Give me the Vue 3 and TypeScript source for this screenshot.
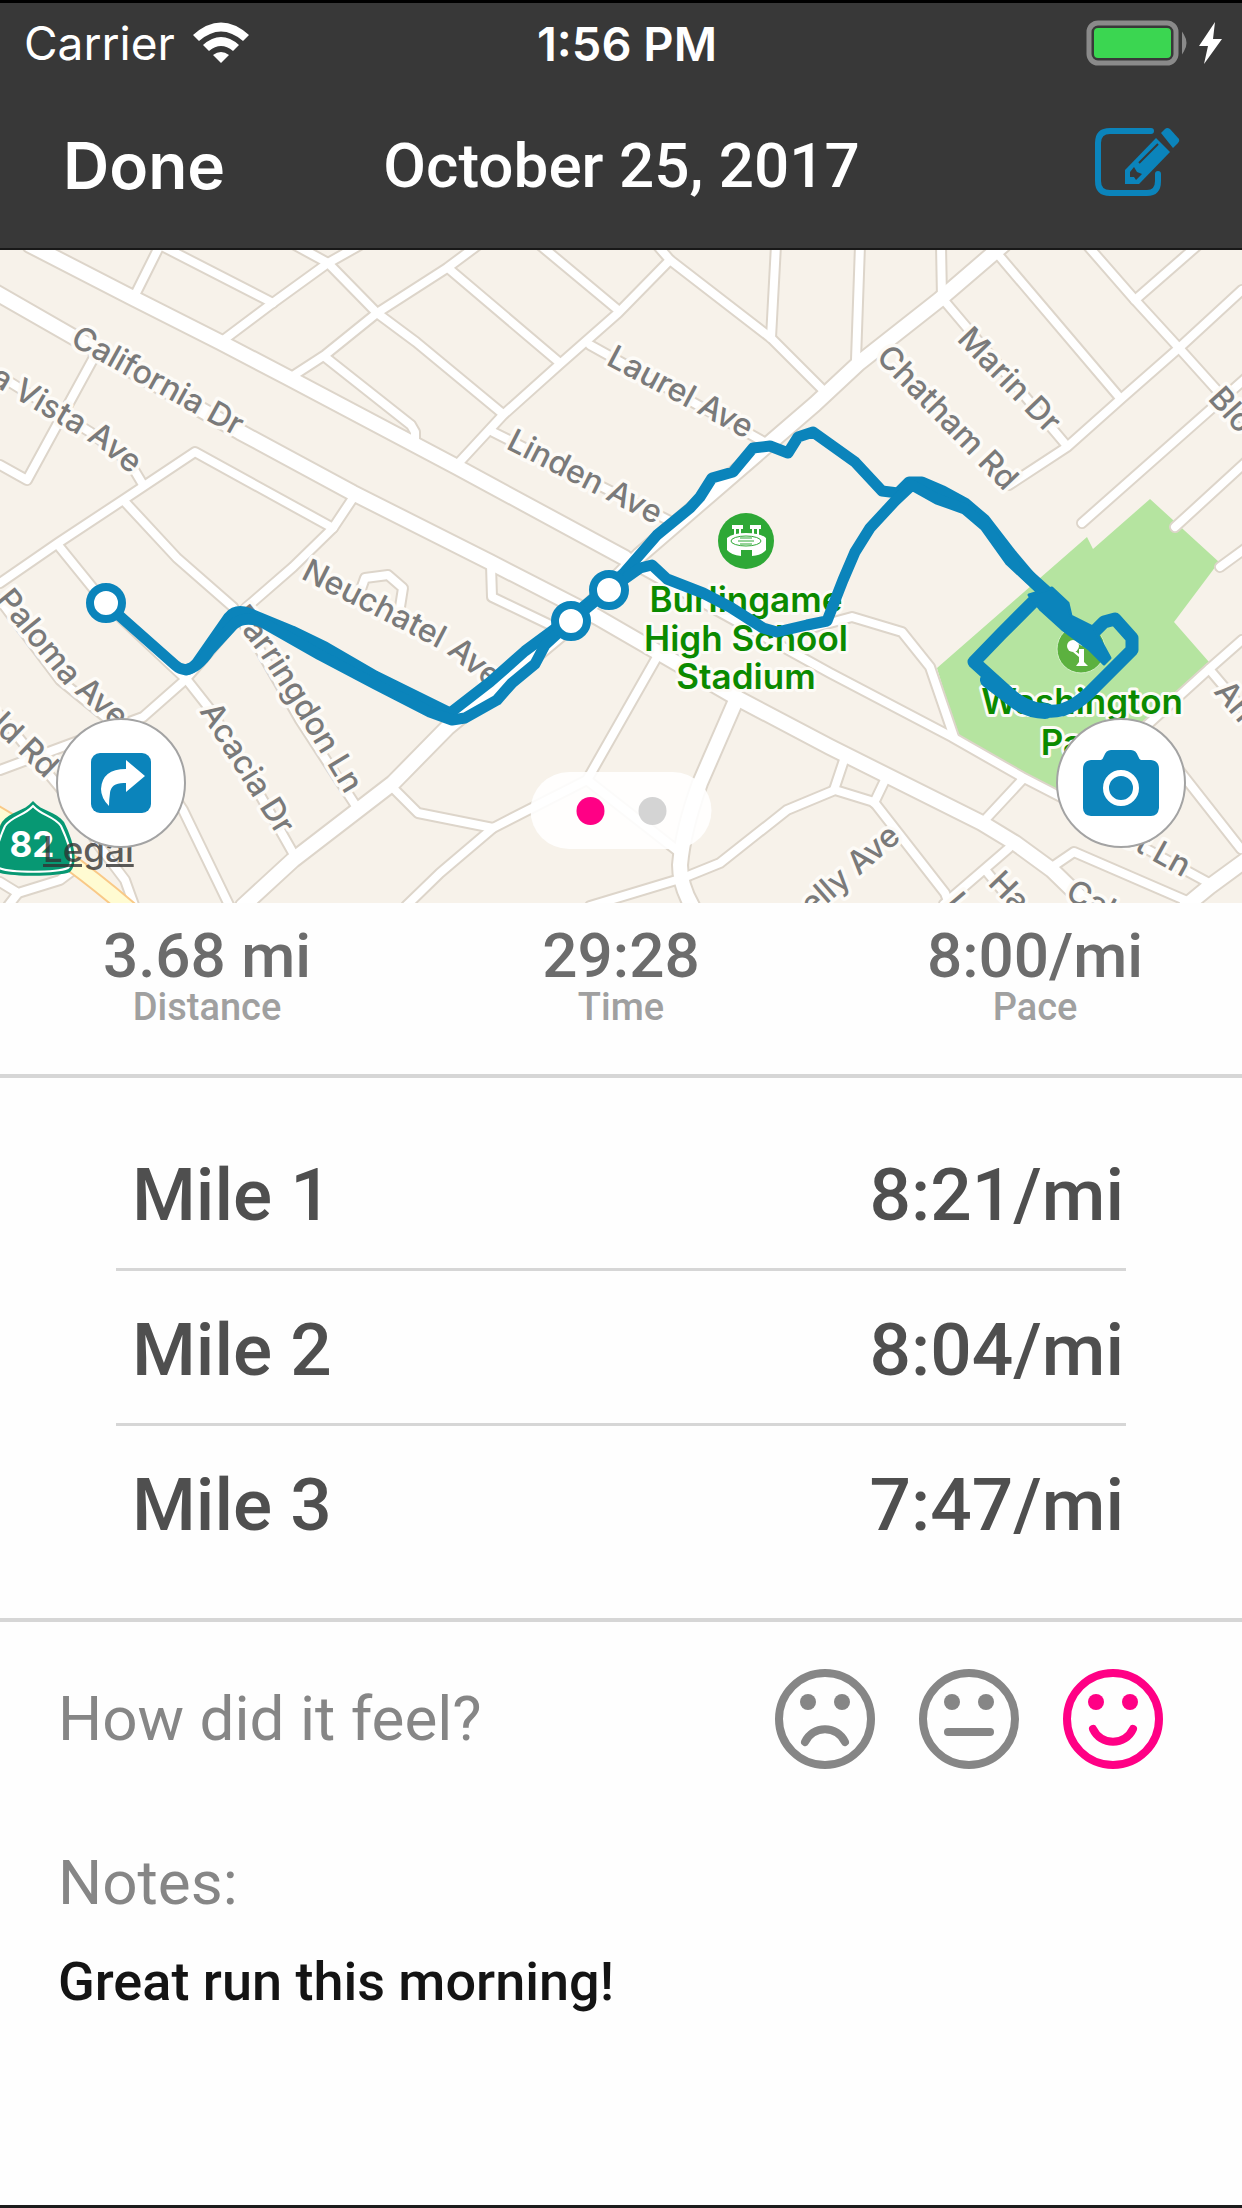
<script setup lang="ts">
import { ref } from 'vue'

interface MapLabel {
  text: string
  x: number
  y: number
  angle: number
}

interface CurvedLabel {
  id: string
  text: string
  path: string
}

const stats = [
  { label: 'Distance', value: '3.68 mi' },
  { label: 'Time', value: '29:28' },
  { label: 'Pace', value: '8:00/mi' },
]

const splits = [
  { name: 'Mile 1', pace: '8:21/mi' },
  { name: 'Mile 2', pace: '8:04/mi' },
  { name: 'Mile 3', pace: '7:47/mi' },
]

const moods = [
  { id: 'bad', name: 'Bad', mouth: 'M30 73 A22 22 0 0 1 70 73' },
  { id: 'okay', name: 'Okay', mouth: 'M29 63 H71' },
  { id: 'good', name: 'Good', mouth: 'M30 60 A22 22 0 0 0 70 60' },
]

const mood = ref('good')
const notes = ref('Great run this morning!')
const slide = ref(0)

const minorRoads = [
  'M160 245 L134 297',
  'M160 245 L273 303',
  'M360 245 L328 263 L270 305 L222 341',
  'M295 245 L328 263 L377 313 L416 342 L503 414',
  'M478 245 L447 268 L377 313 L325 355 L288 379',
  'M325 357 L411 425 L415 432 L415 447',
  'M98 350 L27 480 L0 465',
  'M0 376 L90 432 L130 463 L142 483',
  'M0 583 L58 543 L123 500 L195 452 L333 528 L353 498',
  'M333 528 L293 567 L247 607 L185 680 L143 717 L0 770',
  'M125 502 L177 558 L233 607 L260 650 L300 720 L356 806',
  'M58 545 L105 603 L187 680 L213 713 L280 830 L297 860',
  'M0 600 L60 680 L140 745 L183 810 L229 905',
  'M0 715 L70 800 L100 847 L125 880 L134 905',
  'M0 882 L18 893 L60 880 L76 868',
  'M18 893 L8 906',
  'M360 592 L365 578 L388 575 L403 588 L400 607',
  'M390 785 L418 813 L493 828 L587 780 L657 657',
  'M493 828 L440 873 L406 906',
  'M587 780 L679 852',
  'M590 906 L683 878 L720 863 L787 810 L835 790 L874 802 L945 893 L950 906',
  'M844 760 L834 790',
  'M885 780 L874 803',
  'M1022 780 L982 823',
  'M1009 848 L944 904',
  'M987 872 L1010 900',
  'M1052 867 L1074 852 L1187 901',
  'M1175 765 L1241 849',
  'M1130 840 L1209 883',
  'M1242 640 L1209 669 L1145 727',
  'M1209 669 L1242 708',
  'M815 627 L852 617 L902 632 L930 667 L954 737',
  'M491 565 L492 597 L565 632',
  'M448 268 L560 363',
  'M540 245 L618 310',
  'M657 245 L670 260 L618 313 L560 364 L503 415 L454 468',
  'M670 260 L771 338 L823 390',
  'M776 245 L771 338',
  'M860 245 L856 360',
  'M941 245 L942 298 L1067 446',
  'M990 245 L1120 398',
  'M1242 290 L1179 348 L1122 398 L1067 447 L1009 485',
  'M1087 245 L1135 300 L1179 348 L1242 418',
  'M1198 245 L1135 300',
  'M1246 378 L1082 523',
  'M1246 462 L1175 527',
  'M1246 548 L1220 567',
  'M590 345 L766 443',
  'M493 432 L672 522',
  'M640 568 L830 673 L952 737 L1022 777 L1090 812',
]

const wideRoads = [
  'M30 245 L133 298 L220 342 L287 377 L457 467 L625 558',
  'M-5 292 L70 335 L240 432 L353 493 L490 562 L597 617 L737 698 L830 747 L982 823 L1015 843 L1052 870 L1090 907',
  'M1003 245 L939 300 L859 363 L815 404 L640 555 L571 625 L448 727 L393 783 L293 860 L243 906',
  'M737 698 L700 783 Q683 830 680 865 Q680 885 692 906',
  'M1246 860 L1209 887 L1186 906',
]

const runs = [
  'M105 603 L175 665 Q186 675 197 663 L229 617 Q236 609 248 613 L292 631 L325 647 L375 676 L450 713 L490 682 L525 651 L548 634 L571 617 L623 574 L657 535 L690 508 L700 497 L712 478 L733 472 L753 448 L770 446 L788 453 L798 437 L813 432 L855 462 L882 491 L898 493 L909 482 L922 482 L943 491 L965 503 L985 520 L1012 555 L1039 587',
  'M186 670 Q198 668 210 650 L233 625 Q244 615 262 622 L320 655 L375 684 L430 712 L452 720 L465 718 L497 700 L512 683 L535 664 L545 645 L571 621 L609 590 L640 568 L652 565 L667 579 L703 593 L730 607 L763 628 L777 632 L807 625 L827 621 L843 580 L855 552 L870 528 L895 501 L912 485 L937 499 L965 509 L985 526 L1010 561 L1039 588',
]

const labels: MapLabel[] = [
  { text: 'California Dr', x: 69, y: 344, angle: 29 },
  { text: 'Laurel Ave', x: 605, y: 364, angle: 28 },
  { text: 'Linden Ave', x: 505, y: 448, angle: 27 },
  { text: 'Chatham Rd', x: 875, y: 358, angle: 46 },
  { text: 'Marin Dr', x: 956, y: 340, angle: 46 },
  { text: 'Blo', x: 1207, y: 399, angle: 48 },
  { text: 'Acacia Dr', x: 199, y: 711, angle: 58 },
  { text: 'eld Rd', x: -23, y: 713, angle: 44 },
  { text: 'elly Ave', x: 812, y: 917, angle: -41 },
  { text: 'Ha', x: 987, y: 884, angle: 46 },
  { text: 'Cal', x: 1064, y: 898, angle: 28 },
  { text: 'L', x: 944, y: 904, angle: 50 },
  { text: 'et Ln', x: 1117, y: 841, angle: 29 },
  { text: 'An', x: 1213, y: 692, angle: 50 },
]

const curvedLabels: CurvedLabel[] = [
  { id: 'vista', text: 'a Vista Ave', path: 'M-11 383 L25 404 L78 435 L96 446 L150 490' },
  { id: 'neuchatel', text: 'Neuchatel Ave', path: 'M300 578 L395 626 L445 652 L510 704' },
  { id: 'farringdon', text: 'Farringdon Ln', path: 'M230 616 L258 652 L290 702 L376 846' },
  { id: 'paloma', text: 'Paloma Ave', path: 'M-5 600 L62 682 L150 758' },
]

const waypoints = [
  { x: 106, y: 603 },
  { x: 571, y: 621 },
  { x: 609, y: 590 },
]
</script>

<template>
  <main class="screen">
    <header class="top">
      <div class="status">
        <div class="carrier">
          <span>Carrier</span>
          <svg width="56" height="42" viewBox="0 0 56 42" aria-hidden="true">
            <path d="M0 13 Q28 -12 56 13 L50 19 Q28 0 6 19 Z" fill="#fff" />
            <path d="M10 23 Q28 7 46 23 L40 29 Q28 19 16 29 Z" fill="#fff" />
            <path d="M20 33 Q28 27 36 33 L28 41 Z" fill="#fff" />
          </svg>
        </div>
        <span class="clock">1:56 PM</span>
        <svg class="battery" width="138" height="46" viewBox="0 0 138 46" aria-hidden="true">
          <rect x="3" y="3" width="87" height="40" rx="9" fill="none" stroke="#8a8a8a" stroke-width="5" />
          <rect x="8" y="8" width="77" height="30" rx="4" fill="#3bd651" />
          <path d="M97 15 Q102 23 97 31 Z" fill="#8a8a8a" stroke="#8a8a8a" stroke-width="2" />
          <path d="M129 2 L113 26 H122 L118 44 L136 19 H127 Z" fill="#fff" />
        </svg>
      </div>
      <nav class="bar">
        <button type="button" class="done">Done</button>
        <h1>October 25, 2017</h1>
        <button type="button" class="edit" aria-label="Edit">
          <svg width="86" height="70" viewBox="0 0 86 70" aria-hidden="true">
            <path d="M57 4 H16 Q4 4 4 16 V54 Q4 66 16 66 H53 Q64 66 64 54 V47" fill="none" stroke="#0b84bb" stroke-width="6" stroke-linecap="round" />
            <path d="M62 11 L76 25 L45 57 H31 V43 Z" fill="#0b84bb" />
            <path d="M67 6 L71 2 Q73 0 76 2 L85 12 Q86 14 84 16 L79 21 Z" fill="#0b84bb" />
            <path d="M36 45 L40 40 L43 45 L48 47 L42 53 L40 50 L36 50 Z" fill="#383838" />
            <path d="M45 36 L64 17" stroke="#383838" stroke-width="2" />
          </svg>
        </button>
      </nav>
    </header>

    <section class="map" aria-label="Route map">
      <svg class="canvas" viewBox="0 250 1242 653">
        <rect x="0" y="250" width="1242" height="653" fill="#f7f2ea" />
        <path
          d="M1150 499 L1219 562 L1174 622 L1209 662 L1120 760 L1080 802 L959 742 L937 668 L1087 537 L1093 549 Z"
          fill="#b5e4a0"
        />
        <g class="road">
          <g stroke="#ddd5ca">
            <path v-for="d in minorRoads" :key="d" :d="d" stroke-width="12" />
            <path v-for="d in wideRoads" :key="d" :d="d" stroke-width="18" />
          </g>
          <g stroke="#fff">
            <path v-for="d in minorRoads" :key="d" :d="d" stroke-width="8" />
            <path v-for="d in wideRoads" :key="d" :d="d" stroke-width="14" />
          </g>
          <path d="M-5 813 Q60 850 130 910" stroke="#f9c987" stroke-width="18" />
          <path d="M-5 813 Q60 850 130 910" stroke="#fffbd2" stroke-width="14" />
        </g>

        <g class="street">
          <text v-for="l in labels" :key="l.text" :transform="`translate(${l.x} ${l.y}) rotate(${l.angle})`">{{ l.text }}</text>
          <template v-for="l in curvedLabels" :key="l.id">
            <path :id="l.id" :d="l.path" class="guide" />
            <text><textPath :href="`#${l.id}`">{{ l.text }}</textPath></text>
          </template>
        </g>

        <circle cx="746" cy="541" r="28" fill="#2ea836" />
        <g fill="#fff">
          <rect x="732" y="525" width="11" height="4" />
          <rect x="750" y="525" width="11" height="4" />
          <path d="M734 529 h2 v6 h-2z M739 529 h2 v6 h-2z M752 529 h2 v6 h-2z M757 529 h2 v6 h-2z" />
          <path d="M727 538 Q733 533 746 533 Q760 533 766 538 V550 Q762 555 752 556 V550 H741 V556 Q731 555 727 550 Z" />
        </g>
        <ellipse cx="746" cy="541" rx="15" ry="5" fill="none" stroke="#2ea836" stroke-width="1" />
        <path d="M738 541 H754 M740 538 H752 M740 544 H752" stroke="#2ea836" stroke-width="1" />

        <circle cx="1081" cy="649" r="24" fill="#5cb13f" stroke="#d2efc6" stroke-width="1" />
        <g fill="#fff">
          <circle cx="1073" cy="646" r="6" />
          <circle cx="1084" cy="638" r="8" />
          <path d="M1074 650 L1079 654 V649 H1084 V662 L1088 666 H1076 L1079 662 V657 L1073 652 Z" />
        </g>

        <g class="place">
          <text x="746" y="612">Burlingame</text>
          <text x="746" y="651">High School</text>
          <text x="746" y="689">Stadium</text>
          <text x="1082" y="714">Washington</text>
          <text x="1079" y="755">Park</text>
        </g>

        <g class="run">
          <path v-for="d in runs" :key="d" :d="d" />
          <path
            d="M1035 600 L1002 633 L974 662 L1015 699 Q1039 715 1062 710 Q1075 706 1089 693 L1132 650 L1132 638 L1115 619 L1104 622 L1092 634"
            stroke-width="13"
          />
          <path d="M988 680 L1017 702 Q1030 711 1045 711" stroke-width="16" />
          <path d="M1024 572 L1055 600 L1064 617" stroke-width="13" />
          <path
            d="M1029 595 L1052 588 L1068 603 L1071 616 L1093 627 L1104 647 L1110 658 L1104 664 L1089 649 L1062 629 L1041 610 Z"
            stroke-width="3"
            fill="#0b84bb"
          />
        </g>
        <g v-for="p in waypoints" :key="p.x">
          <circle :cx="p.x" :cy="p.y" r="16" fill="#fff" stroke="#0b84bb" stroke-width="8" />
        </g>

        <path
          d="M33 801 C42 812 56 811 64 822 C72 838 80 862 70 872 C58 877 10 877 -3 872 C-12 862 -6 838 2 822 C10 811 24 812 33 801 Z"
          fill="#079873"
        />
        <path
          d="M33 806 C42 816 54 816 61 826 C67 839 76 860 68 868 C56 873 10 873 -1 868 C-8 860 -1 839 5 826 C12 816 24 816 33 806 Z"
          fill="none"
          stroke="#fff"
          stroke-width="2"
        />
        <text class="route-number" x="32" y="857">82</text>
      </svg>

      <a class="legal" href="#legal">Legal</a>

      <button type="button" class="round share" aria-label="Share">
        <svg width="60" height="60" viewBox="0 0 60 60" aria-hidden="true">
          <rect width="60" height="60" rx="9" fill="#0b84bb" />
          <path d="M35 7 L54 23 L35 39 V30 Q20 29 19 40 Q18 47 18 53 Q10 45 10 36 Q11 16 35 16 Z" fill="#fff" />
        </svg>
      </button>

      <div class="pager">
        <button
          v-for="n in 2"
          :key="n"
          type="button"
          class="dot"
          :class="{ on: slide === n - 1 }"
          :aria-label="`Slide ${n}`"
          @click="slide = n - 1"
        ></button>
      </div>

      <button type="button" class="round photo" aria-label="Photos">
        <svg width="76" height="66" viewBox="0 0 76 66" aria-hidden="true">
          <path d="M8 10 H18 Q20 9 21 6 Q23 0 28 0 H48 Q53 0 55 6 Q56 9 58 10 H68 Q76 11 76 19 V58 Q75 66 68 66 H8 Q0 65 0 58 V19 Q0 11 8 10 Z" fill="#0b84bb" />
          <circle cx="38" cy="38" r="15" fill="none" stroke="#fff" stroke-width="6" />
        </svg>
      </button>
    </section>

    <dl class="stats">
      <div v-for="s in stats" :key="s.label" class="stat">
        <dt>{{ s.label }}</dt>
        <dd>{{ s.value }}</dd>
      </div>
    </dl>

    <section class="splits">
      <table>
        <tbody>
          <tr v-for="s in splits" :key="s.name">
            <th scope="row">{{ s.name }}</th>
            <td>{{ s.pace }}</td>
          </tr>
        </tbody>
      </table>
    </section>

    <form class="journal" @submit.prevent>
      <fieldset class="feel">
        <legend class="hidden">How did it feel?</legend>
        <span class="prompt" aria-hidden="true">How did it feel?</span>
        <div class="faces">
          <label v-for="m in moods" :key="m.id" class="face" :class="{ picked: mood === m.id }">
            <input v-model="mood" class="hidden" type="radio" name="mood" :value="m.id" :aria-label="m.name" />
            <svg width="100" height="100" viewBox="0 0 100 100" aria-hidden="true">
              <circle cx="50" cy="50" r="46" fill="none" stroke="currentColor" stroke-width="8" />
              <circle cx="33" cy="33" r="8" fill="currentColor" />
              <circle cx="67" cy="33" r="8" fill="currentColor" />
              <path :d="m.mouth" fill="none" stroke="currentColor" stroke-width="8" stroke-linecap="round" />
            </svg>
          </label>
        </div>
      </fieldset>
      <label class="prompt notes-label" for="notes">Notes:</label>
      <textarea id="notes" v-model="notes" rows="2"></textarea>
    </form>
  </main>
</template>

<style>
body {
  margin: 0;
  background: #fefefe;
}
</style>

<style scoped>
.screen {
  display: flex;
  flex-direction: column;
  box-sizing: border-box;
  min-height: 100vh;
  border-bottom: 3px solid #1c1c1c;
  background: #fefefe;
  font-family: Roboto, sans-serif;
}

button {
  padding: 0;
  border: 0;
  background: none;
  font: inherit;
  color: inherit;
  cursor: pointer;
}

svg {
  display: block;
}

.top {
  border-top: 3px solid #000;
  border-bottom: 2px solid #181818;
  background: #383838;
  color: #fff;
}

.status {
  display: grid;
  grid-template-columns: 1fr auto 1fr;
  align-items: center;
  height: 80px;
  padding: 0 18px 0 24px;
  font-family: Inter, sans-serif;
  font-size: 46px;
}

.carrier {
  display: flex;
  align-items: center;
  gap: 18px;
}

.clock {
  padding-left: 6px;
  font-size: 47px;
  font-weight: 600;
}

.battery {
  justify-self: end;
}

.bar {
  display: grid;
  grid-template-columns: 1fr auto 1fr;
  align-items: center;
  height: 165px;
  padding: 0 62px 0 63px;
}

.done {
  justify-self: start;
  font-family: Inter, sans-serif;
  font-size: 64px;
  font-weight: 600;
}

h1 {
  margin: 0;
  font-size: 62px;
  font-weight: 500;
}

.edit {
  justify-self: end;
  padding-bottom: 8px;
}

.map {
  position: relative;
}

.canvas {
  width: 100%;
  height: auto;
}

.road {
  fill: none;
  stroke-linecap: round;
  stroke-linejoin: round;
}

.street,
.place {
  font-family: Inter, sans-serif;
  paint-order: stroke;
  stroke: #fdfbf7;
  stroke-linejoin: round;
}

.street {
  font-size: 32px;
  font-weight: 500;
  fill: #7a7a7a;
  stroke-width: 7px;
}

.guide {
  fill: none;
  stroke: none;
}

.place {
  font-size: 35px;
  font-weight: 600;
  text-anchor: middle;
  fill: #0b8a00;
  stroke-width: 6px;
}

.run {
  fill: none;
  stroke: #0b84bb;
  stroke-width: 11px;
  stroke-linecap: round;
  stroke-linejoin: round;
}

.route-number {
  font-family: Inter, sans-serif;
  font-size: 35px;
  font-weight: 700;
  text-anchor: middle;
  fill: #fff;
}

.legal {
  position: absolute;
  bottom: 34px;
  left: 43px;
  font-family: Inter, sans-serif;
  font-size: 35px;
  font-weight: 500;
  line-height: 40px;
  color: rgba(50, 50, 50, 0.8);
}

.round {
  position: absolute;
  bottom: 55px;
  display: flex;
  align-items: center;
  justify-content: center;
  width: 130px;
  height: 130px;
  border: 2px solid #a3a3a3;
  border-radius: 50%;
  background: #fff;
}

.share {
  left: 56px;
}

.photo {
  right: 56px;
}

.pager {
  position: absolute;
  bottom: 54px;
  left: 50%;
  display: flex;
  align-items: center;
  justify-content: center;
  gap: 34px;
  width: 181px;
  height: 77px;
  border-radius: 39px;
  background: rgba(255, 255, 255, 0.9);
  transform: translateX(-50%);
}

.dot {
  width: 28px;
  height: 28px;
  border-radius: 50%;
  background: #d4d4d4;
}

.dot.on {
  background: #ff0085;
}

.stats {
  display: grid;
  grid-template-columns: repeat(3, 1fr);
  margin: 0;
  padding: 25px 0 45px;
  border-bottom: 4px solid #d6d6d6;
  text-align: center;
}

.stat {
  display: flex;
  flex-direction: column-reverse;
}

dt {
  padding-top: 1px;
  font-size: 38px;
  font-weight: 500;
  line-height: 44px;
  color: #a0a0a0;
}

dd {
  margin: 0;
  font-size: 62px;
  font-weight: 500;
  line-height: 56px;
  color: #6c6c6c;
}

.splits {
  padding: 38px 116px 37px;
  border-bottom: 4px solid #d6d6d6;
}

table {
  width: 100%;
  border-collapse: separate;
  border-spacing: 0;
}

th,
td {
  box-sizing: border-box;
  height: 155px;
  padding: 6px 0 0;
  border-bottom: 3px solid #d6d6d6;
  font-size: 73px;
  font-weight: 500;
  color: #4f4f4f;
}

th {
  padding-left: 16px;
  text-align: left;
}

td {
  padding-right: 2px;
  text-align: right;
}

tr:last-child th,
tr:last-child td {
  border-bottom-color: transparent;
}

.journal {
  display: flex;
  flex-direction: column;
  padding: 47px 79px 0 58px;
}

.feel {
  display: flex;
  align-items: center;
  justify-content: space-between;
  min-width: 0;
  margin: 0;
  padding: 0;
  border: 0;
}

.prompt {
  font-size: 62px;
  line-height: 70px;
  color: #868686;
}

.faces {
  display: flex;
  gap: 44px;
}

.face {
  position: relative;
  color: #868686;
  cursor: pointer;
}

.face.picked {
  color: #ff0085;
}

.hidden {
  position: absolute;
  width: 1px;
  height: 1px;
  margin: 0;
  overflow: hidden;
  clip-path: inset(50%);
  opacity: 0;
}

.notes-label {
  margin-top: 79px;
}

textarea {
  margin: 32px 0 0;
  padding: 0;
  border: 0;
  outline: 0;
  resize: none;
  background: transparent;
  font-family: inherit;
  font-size: 54px;
  font-weight: 500;
  line-height: 64px;
  color: #141414;
}
</style>
